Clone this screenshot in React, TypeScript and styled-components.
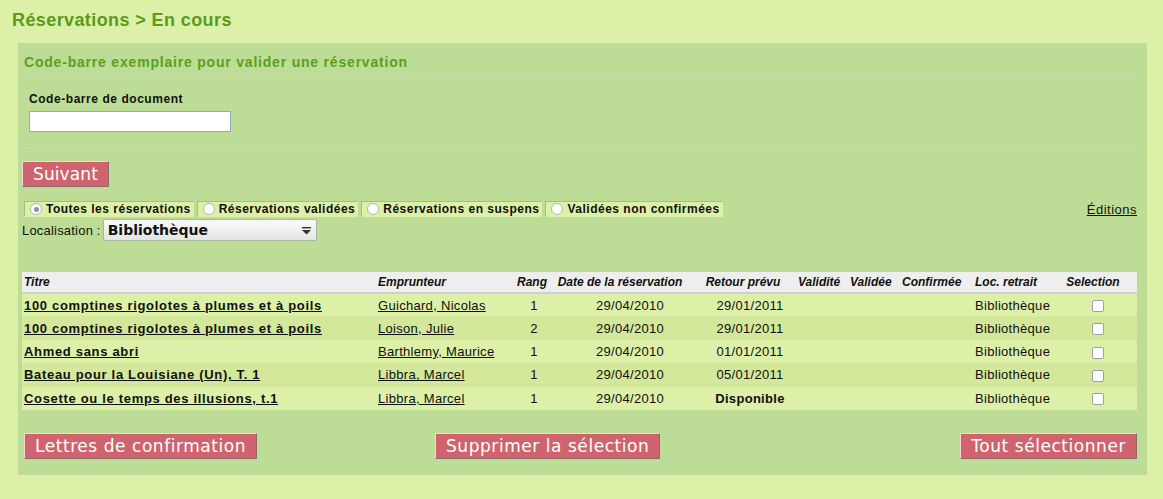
import React from "react";
import styled, { createGlobalStyle } from "styled-components";

const Global = createGlobalStyle`
  html, body { margin: 0; padding: 0; background: #dcf0a8; }
  body { font-family: "Liberation Sans", Arial, sans-serif; color: #111; letter-spacing: 0.3px; }
`;

const Page = styled.div`
  padding: 9px 16px 25px 12px;
`;

const Title = styled.h1`
  margin: 0 0 12px 0;
  font-size: 18px;
  line-height: 22px;
  font-weight: bold;
  letter-spacing: 0.4px;
  color: #5a9b1c;
`;

const Panel = styled.div`
  margin-left: 6px;
  width: 1129px;
  box-sizing: border-box;
  background: #bddd96;
  padding: 10px 10px 16px 4px;
`;

const SectionTitle = styled.h2`
  margin: 0 0 0 2px;
  font-size: 14px;
  line-height: 18px;
  font-weight: bold;
  letter-spacing: 0.8px;
  color: #5c9e22;
`;

const Rule = styled.div<{ $top: number; $bottom: number }>`
  height: 0;
  border-top: 2px dotted #c9d7bb;
  margin: ${(p) => `${p.$top}px 0 ${p.$bottom}px 0`};
`;

const Field = styled.div`
  display: flex;
  flex-direction: column;
  padding-left: 7px;
`;

const Label = styled.label`
  font-size: 12px;
  font-weight: bold;
  line-height: 15px;
  letter-spacing: 0.55px;
  margin-bottom: 4px;
`;

const Input = styled.input`
  width: 202px;
  height: 21px;
  box-sizing: border-box;
  border: 1px solid #8fa9c8;
  background: #fff;
  padding: 0 3px;
  outline: none;
`;

const RedButton = styled.button<{ $ls?: number }>`
  font-family: "DejaVu Sans", sans-serif;
  font-size: 17px;
  letter-spacing: ${(p) => p.$ls ?? 0.55}px;
  color: #fff;
  background: #d0646e;
  border: 1px solid;
  border-color: #f2d6d8 #8c6a6a #8c6a6a #f2d6d8;
  height: 26px;
  padding: 0 10px;
  line-height: 22px;
  cursor: pointer;
`;

const SuivantRow = styled.div`
  margin-bottom: 14px;
`;

const FilterBar = styled.div`
  display: flex;
  align-items: center;
  justify-content: space-between;
  padding-left: 2px;
`;

const Tabs = styled.div`
  display: flex;
  gap: 3px;
`;

const Tab = styled.label`
  display: flex;
  align-items: center;
  gap: 4px;
  height: 16px;
  box-sizing: border-box;
  padding: 0 2px 0 5px;
  background: #dcf0a8;
  border: 1px solid #a4bd86;
  border-right-color: #dcf0a8;
  border-bottom-color: #dcf0a8;
  font-size: 12px;
  font-weight: bold;
  letter-spacing: 0.5px;
  white-space: nowrap;
`;

const Radio = styled.span<{ $checked?: boolean }>`
  width: 12px;
  height: 12px;
  border-radius: 50%;
  box-sizing: border-box;
  border: 1px solid #b5b5b5;
  background: #fff;
  display: inline-flex;
  align-items: center;
  justify-content: center;
  &::after {
    content: "";
    width: 5px;
    height: 5px;
    border-radius: 50%;
    background: ${(p) => (p.$checked ? "#8d8fa6" : "transparent")};
  }
`;

const Link = styled.a`
  color: #111;
  text-decoration: underline;
  font-size: 13px;
  letter-spacing: 0.5px;
`;

const LocRow = styled.div`
  display: flex;
  align-items: center;
  margin-top: 2px;
  font-size: 13px;
  letter-spacing: 0.2px;
`;

const Select = styled.div`
  margin-left: 2px;
  width: 214px;
  height: 22px;
  box-sizing: border-box;
  border: 1px solid #a9b4a0;
  border-radius: 2px;
  background: linear-gradient(#fafafa, #e3e5e3);
  display: flex;
  align-items: center;
  justify-content: space-between;
  padding: 0 4px 0 4px;
  font-family: "DejaVu Sans", sans-serif;
  font-weight: bold;
  font-size: 14px;
  letter-spacing: 0;
`;

const Table = styled.table`
  margin-top: 31px;
  width: 1115px;
  border-collapse: collapse;
  table-layout: fixed;
`;

const Th = styled.th<{ $align?: string; $pl?: number }>`
  background: #eeeeee;
  border-bottom: 2px solid #cfcfcf;
  height: 20px;
  padding: 0 0 0 ${(p) => p.$pl ?? 0}px;
  font-size: 12px;
  font-style: italic;
  font-weight: bold;
  letter-spacing: 0;
  text-align: ${(p) => p.$align ?? "left"};
  white-space: nowrap;
`;

const Tr = styled.tr<{ $alt?: boolean }>`
  background: ${(p) => (p.$alt ? "#d3e89b" : "#dcf0a8")};
  height: 23.4px;
`;

const Td = styled.td<{ $align?: string; $pl?: number; $bold?: boolean }>`
  padding: 0 0 0 ${(p) => p.$pl ?? 0}px;
  font-size: 13px;
  text-align: ${(p) => p.$align ?? "left"};
  font-weight: ${(p) => (p.$bold ? "bold" : "normal")};
  white-space: nowrap;
`;

const TitleLink = styled.a`
  color: #111;
  font-weight: bold;
  text-decoration: underline;
  letter-spacing: 0.68px;
`;

const NameLink = styled.a`
  color: #111;
  text-decoration: underline;
`;

const Check = styled.span`
  display: inline-block;
  width: 12px;
  height: 12px;
  box-sizing: border-box;
  border: 1px solid #a0a0a0;
  border-radius: 2px;
  background: #fff;
  vertical-align: middle;
`;

const Actions = styled.div`
  margin-top: 23px;
  display: grid;
  grid-template-columns: 411px auto 1fr;
  padding-left: 2px;
  & > :last-child { justify-self: end; }
`;

const SelectArrow = () => (
  <svg width="11" height="11" viewBox="0 0 11 11">
    <rect x="1" y="2" width="9" height="1.4" fill="#333" />
    <path d="M1 5 L10 5 L5.5 9.5 Z" fill="#333" />
  </svg>
);

const rows = [
  { t: "100 comptines rigolotes à plumes et à poils", n: "Guichard, Nicolas", r: "1", d: "29/04/2010", ret: "29/01/2011" },
  { t: "100 comptines rigolotes à plumes et à poils", n: "Loison, Julie", r: "2", d: "29/04/2010", ret: "29/01/2011" },
  { t: "Ahmed sans abri", n: "Barthlemy, Maurice", r: "1", d: "29/04/2010", ret: "01/01/2011" },
  { t: "Bateau pour la Louisiane (Un), T. 1", n: "Libbra, Marcel", r: "1", d: "29/04/2010", ret: "05/01/2011" },
  { t: "Cosette ou le temps des illusions, t.1", n: "Libbra, Marcel", r: "1", d: "29/04/2010", ret: "Disponible", bold: true },
];

export default function App() {
  return (
    <>
      <Global />
      <Page>
        <Title>Réservations &gt; En cours</Title>
        <Panel>
          <SectionTitle>Code-barre exemplaire pour valider une réservation</SectionTitle>
          <Rule $top={3} $bottom={16} />
          <Field>
            <Label>Code-barre de document</Label>
            <Input />
          </Field>
          <Rule $top={15} $bottom={12} />
          <SuivantRow>
            <RedButton $ls={0.1}>Suivant</RedButton>
          </SuivantRow>
          <FilterBar>
            <Tabs>
              <Tab><Radio $checked />Toutes les réservations</Tab>
              <Tab><Radio />Réservations validées</Tab>
              <Tab><Radio />Réservations en suspens</Tab>
              <Tab><Radio />Validées non confirmées</Tab>
            </Tabs>
            <Link href="#">Éditions</Link>
          </FilterBar>
          <LocRow>
            Localisation :
            <Select>
              <span>Bibliothèque</span>
              <SelectArrow />
            </Select>
          </LocRow>
          <Table>
            <colgroup>
              <col style={{ width: 352 }} />
              <col style={{ width: 136 }} />
              <col style={{ width: 44 }} />
              <col style={{ width: 132 }} />
              <col style={{ width: 110 }} />
              <col style={{ width: 52 }} />
              <col style={{ width: 52 }} />
              <col style={{ width: 73 }} />
              <col style={{ width: 67 }} />
              <col />
            </colgroup>
            <thead>
              <tr>
                <Th $pl={2}>Titre</Th>
                <Th $pl={4}>Emprunteur</Th>
                <Th $align="center">Rang</Th>
                <Th $align="center">Date de la réservation</Th>
                <Th $align="center" $pl={4}>Retour prévu</Th>
                <Th $pl={2}>Validité</Th>
                <Th $pl={2}>Validée</Th>
                <Th $pl={2}>Confirmée</Th>
                <Th $pl={2}>Loc. retrait</Th>
                <Th $align="center" $pl={9}>Selection</Th>
              </tr>
            </thead>
            <tbody>
              {rows.map((r, i) => (
                <Tr key={i} $alt={i % 2 === 1}>
                  <Td $pl={2}><TitleLink href="#">{r.t}</TitleLink></Td>
                  <Td $pl={4}><NameLink href="#">{r.n}</NameLink></Td>
                  <Td $align="center" $pl={4}>{r.r}</Td>
                  <Td $align="center" $pl={20}>{r.d}</Td>
                  <Td $align="center" $pl={18} $bold={r.bold}>{r.ret}</Td>
                  <Td />
                  <Td />
                  <Td />
                  <Td $pl={2}>Bibliothèque</Td>
                  <Td $align="center" $pl={19}><Check /></Td>
                </Tr>
              ))}
            </tbody>
          </Table>
          <Actions>
            <div><RedButton>Lettres de confirmation</RedButton></div>
            <div><RedButton>Supprimer la sélection</RedButton></div>
            <div><RedButton>Tout sélectionner</RedButton></div>
          </Actions>
        </Panel>
      </Page>
    </>
  );
}
